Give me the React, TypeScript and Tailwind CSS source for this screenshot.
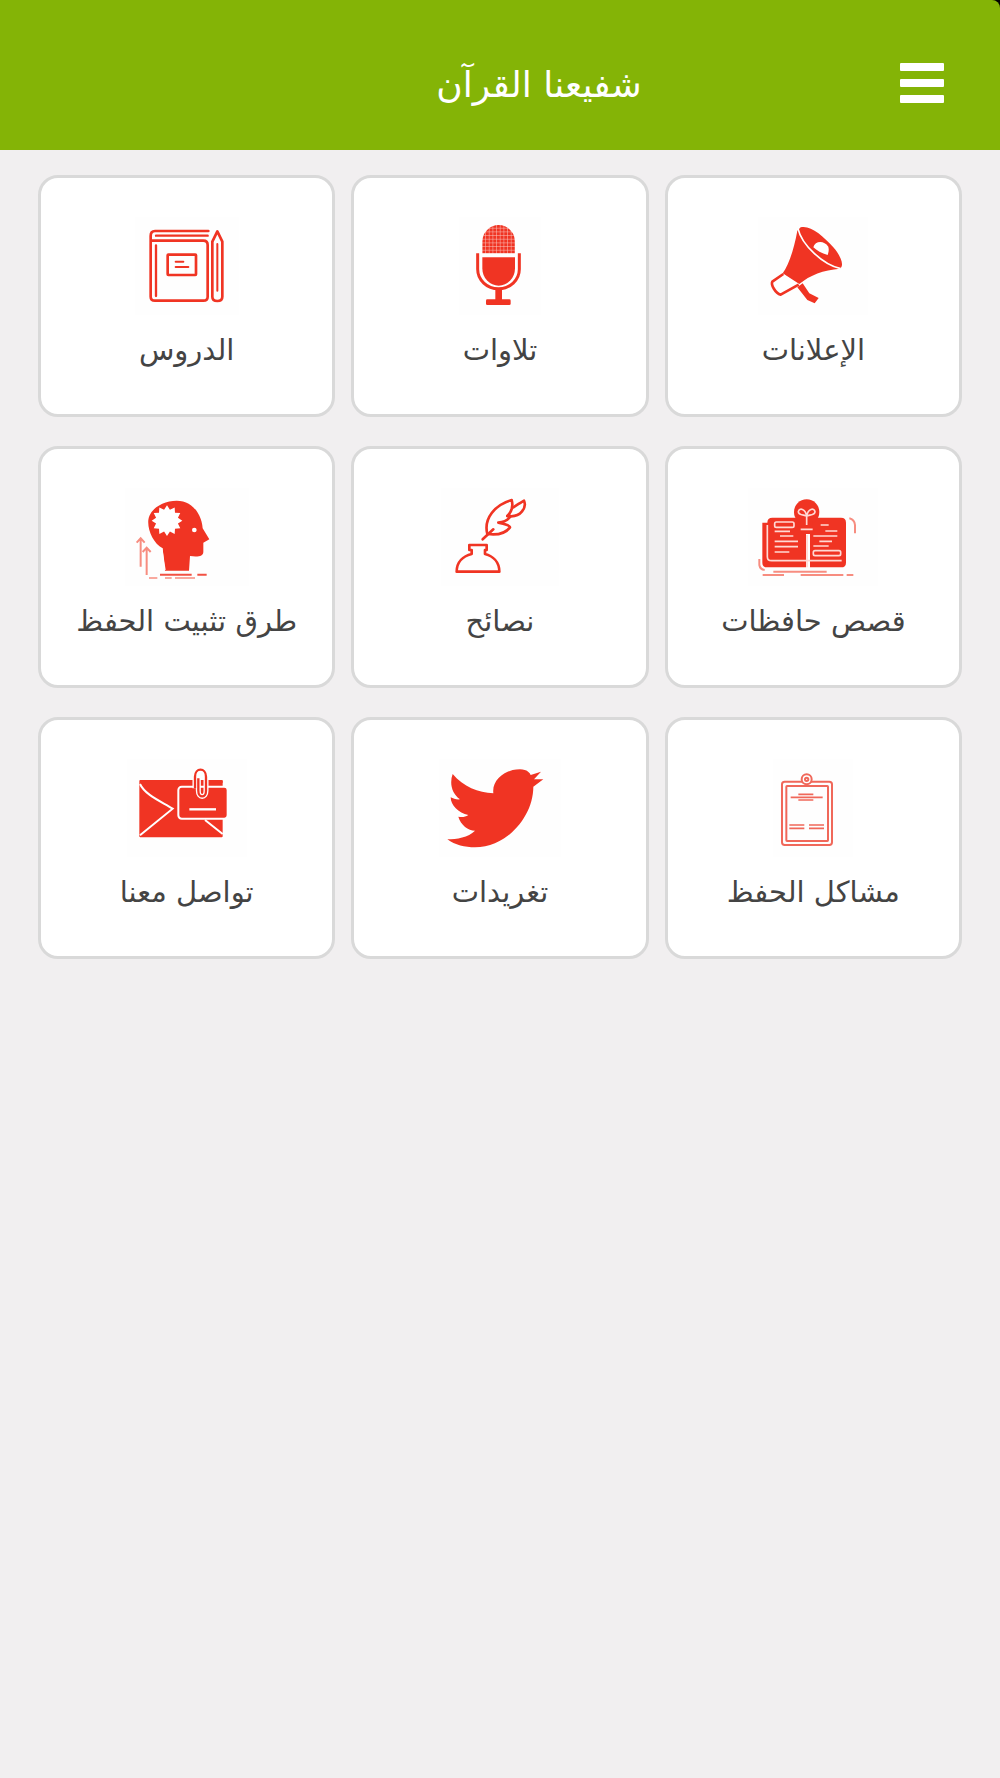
import React from "react";

const R = "#f03423";
const P = "#f78d80";

function Icon({ vb, w, children }: { vb: string; w: string; children: React.ReactNode }) {
  return (
    <svg viewBox={vb} className={`${w} h-[98px] shrink-0 bg-[#fefefe] blur-[0.5px]`}>
      {children}
    </svg>
  );
}

const Megaphone = () => (
  <Icon vb="-6 21 330 294" w="w-[110px]">
    <path d="M112 62C102 118 86 165 68 190L118 222C150 195 190 180 240 176C255 165 240 135 220 112C190 78 150 44 122 52Z" fill={R} />
    <path d="M114 56C125 105 190 165 242 176" stroke="#fff" strokeWidth="5" fill="none" />
    <path d="M160 112C165 92 192 90 205 110C208 120 205 128 203 135C185 130 170 122 160 112Z" fill="#fff" />
    <path d="M70 192L37 215C32 224 46 250 62 254L116 224" stroke={R} strokeWidth="8" fill="#fff" strokeLinejoin="round" />
    <path d="M112 232L128 220L148 250L176 264L164 280L142 270Z" fill={R} />
  </Icon>
);

const Mic = () => (
  <Icon vb="1077 51 246 294" w="w-[82px]">
    <defs>
      <pattern id="micgrid" x="1147" y="75" width="11" height="11" patternUnits="userSpaceOnUse">
        <rect width="11" height="11" fill={R} />
        <path d="M0 10.5H11M10.5 0V11" stroke="#fff" strokeWidth="2" opacity="0.75" />
      </pattern>
    </defs>
    <path d="M1147 160V125A49 50 0 0 1 1245 125V160Z" fill="url(#micgrid)" />
    <path d="M1147 172H1245V205A49 52 0 0 1 1147 205Z" fill={R} />
    <path d="M1133 160V208A62 58 0 0 0 1258 208V160" stroke={R} strokeWidth="9" fill="none" />
    <rect x="1186" y="266" width="20" height="36" fill={R} />
    <rect x="1158" y="298" width="74" height="17" rx="4" fill={R} />
  </Icon>
);

const Book = () => (
  <Icon vb="105 51 312 294" w="w-[104px]">
    <g stroke={R} strokeWidth="8" fill="none" strokeLinecap="round" strokeLinejoin="round">
      <path d="M325 93H165Q152 93 152 108V290Q152 302 165 302H310Q323 302 323 290V135Q323 122 310 122H152" />
      <path d="M168 107H323M168 136V288" strokeWidth="7" />
      <rect x="203" y="164" width="85" height="61" rx="2" />
      <path d="M227 185H250M227 201H265" strokeWidth="6" />
      <path d="M337 125L352 94L367 125V290Q367 303 352 303Q337 303 337 290Z" />
      <path d="M352 132V272" strokeWidth="6" />
    </g>
  </Icon>
);

const BulbBook = () => (
  <Icon vb="54 24 390 294" w="w-[130px]">
    <path d="M112 128Q112 113 127 113H228V262H112Q97 262 97 248V128Z" fill={R} />
    <path d="M240 113H333Q348 113 348 128V248Q348 262 333 262H240Z" fill={R} />
    <path d="M358 115Q373 118 375 135V160M88 237V255Q90 268 104 270" stroke={P} strokeWidth="6" fill="none" />
    <g stroke="#ffd9d4" strokeWidth="5" fill="none">
      <path d="M112 135V230Q112 242 125 242H335" />
      <rect x="134" y="126" width="58" height="16" rx="5" />
      <rect x="250" y="212" width="82" height="15" rx="5" />
      <path d="M134 154H180M150 168H190M134 184H204M134 200H204M134 216H178" />
      <path d="M272 135H296M286 153H322M250 168H322M268 184H306M250 198H296" />
      <path d="M231 165V262" />
    </g>
    <circle cx="230" cy="96" r="38" fill={R} />
    <path d="M212 125H248L244 162H216Z" fill={R} />
    <path d="M205 95C208 82 226 86 230 108C234 86 252 82 255 95C255 106 238 104 230 108C222 104 205 106 205 95ZM230 108V135M212 148H248" stroke="#ffd9d4" strokeWidth="5" fill="none" />
    <path d="M130 275H290" stroke={P} strokeWidth="6" />
    <path d="M98 285H162M212 285H340M350 285H370" stroke={P} strokeWidth="6" />
  </Icon>
);

const Nib = () => (
  <Icon vb="33 24 354 294" w="w-[118px]">
    <g stroke={R} strokeWidth="8" fill="none" strokeLinejoin="round" strokeLinecap="round">
      <path d="M80 275H208C208 245 188 228 165 222V210H170V195H118V210H125V222C100 228 80 245 80 275Z" />
      <path d="M158 178L190 148" />
      <path d="M172 162C160 115 195 75 245 60C252 85 240 100 232 108C250 100 238 125 205 128C215 130 240 135 240 142C225 162 195 165 172 162Z" />
      <path d="M250 82C262 75 275 65 282 62C290 80 275 115 232 108" />
    </g>
  </Icon>
);

function cog(cx: number, cy: number) {
  const pts: string[] = [];
  const n = 24;
  for (let i = 0; i < n; i++) {
    const r = i % 2 === 0 ? 46 : 34;
    const a = (i / n) * Math.PI * 2;
    pts.push(`${(cx + r * Math.cos(a)).toFixed(1)},${(cy + r * Math.sin(a)).toFixed(1)}`);
  }
  return pts.join(" ");
}

const Head = () => (
  <Icon vb="15 24 372 294" w="w-[124px]">
    <path d="M135 272L128 205C100 190 82 150 85 120C90 85 130 62 170 62C215 62 245 100 248 145L268 178L250 188V215C250 228 235 232 210 228L207 272Z" fill={R} />
    <polygon points={cog(141, 122)} fill="#fff" />
    <circle cx="223" cy="150" r="7" fill="#fff" />
    <path d="M125 205L135 270" stroke="#fff" strokeWidth="4" />
    <path d="M62 260V180M50 188L62 175L74 188M80 285V208M68 216L80 203L92 216" stroke={P} strokeWidth="6" fill="none" />
    <path d="M120 284H215M232 284H260" stroke={R} strokeWidth="6" opacity="0.85" />
    <path d="M87 294H112M135 294H155M165 294H225" stroke={P} strokeWidth="5" />
  </Icon>
);

const Clipboard = () => (
  <Icon vb="9 -18 240 294" w="w-[80px]">
    <g stroke="#f0685a" fill="none" strokeWidth="6">
      <rect x="36" y="50" width="150" height="190" rx="8" />
      <rect x="49" y="63" width="125" height="165" rx="2" />
      <circle cx="110" cy="43" r="15" fill="#fff" />
      <circle cx="110" cy="43" r="5" />
      <path d="M85 88H130M62 97H158M85 105H130M58 180H103M58 190H103M117 180H162M117 190H162" strokeWidth="5" />
    </g>
  </Icon>
);

const Bird = () => (
  <Icon vb="-3 -3 366 294" w="w-[122px]">
    <path
      d="M38 42C70 80 115 98 160 100C155 60 195 28 240 28C262 28 270 40 272 45L303 35L282 58L310 58L280 80C280 170 200 262 105 262C75 262 45 255 22 238C50 238 85 232 105 212C85 212 62 195 55 170C65 172 75 172 85 165C55 160 32 135 32 112C40 115 50 120 60 118C35 100 28 70 38 42Z"
      fill={R}
    />
  </Icon>
);

const Mail = () => (
  <Icon vb="-9 -3 360 294" w="w-[120px]">
    <rect x="28" y="60" width="250" height="172" rx="3" fill={R} />
    <path d="M30 72C45 105 95 125 128 146L30 226M225 180L278 222" stroke="#fff" strokeWidth="6" fill="none" />
    <rect x="145" y="80" width="148" height="96" rx="10" fill={R} stroke="#fff" strokeWidth="6" />
    <path d="M178 148H258" stroke="#fff" strokeWidth="7" />
    <path d="M255 65H278" stroke={R} strokeWidth="7" />
    <path d="M195 85V50C195 22 228 22 228 50V92C228 115 205 115 205 92V55" stroke="#fff" strokeWidth="15" fill="none" />
    <path d="M195 85V50C195 22 228 22 228 50V92C228 115 205 115 205 92V55" stroke={R} strokeWidth="7" fill="none" />
  </Icon>
);

const items: { label: string; icon: React.ReactNode }[] = [
  { label: "الإعلانات", icon: <Megaphone /> },
  { label: "تلاوات", icon: <Mic /> },
  { label: "الدروس", icon: <Book /> },
  { label: "قصص حافظات", icon: <BulbBook /> },
  { label: "نصائح", icon: <Nib /> },
  { label: "طرق تثبيت الحفظ", icon: <Head /> },
  { label: "مشاكل الحفظ", icon: <Clipboard /> },
  { label: "تغريدات", icon: <Bird /> },
  { label: "تواصل معنا", icon: <Mail /> },
];

export default function App() {
  return (
    <div dir="rtl" className="min-h-[1778px] bg-[#f1eff0] font-['DejaVu_Sans',sans-serif]">
      <div className="bg-black">
        <header className="relative flex h-[150px] items-center justify-center rounded-tr-[8px] bg-[#84b406] pl-[78px] pt-[20px]">
          <h1 className="text-[36px] font-normal leading-none text-white">شفيعنا القرآن</h1>
          <div className="absolute right-[56px] top-[63px] flex w-[44px] flex-col gap-[8px]">
            <span className="h-[8px] rounded-[1px] bg-white" />
            <span className="h-[8px] rounded-[1px] bg-white" />
            <span className="h-[8px] rounded-[1px] bg-white" />
          </div>
        </header>
      </div>
      <main className="grid grid-cols-3 gap-x-[16px] gap-y-[29px] px-[38px] pt-[25px]">
        {items.map((it) => (
          <div
            key={it.label}
            className="flex h-[242px] flex-col items-center rounded-[20px] border-[3px] border-[#d9d9d9] bg-white pt-[39px]"
          >
            {it.icon}
            <div className="mt-[15px] text-[29px] leading-[40px] text-[#444444]">{it.label}</div>
          </div>
        ))}
      </main>
    </div>
  );
}
